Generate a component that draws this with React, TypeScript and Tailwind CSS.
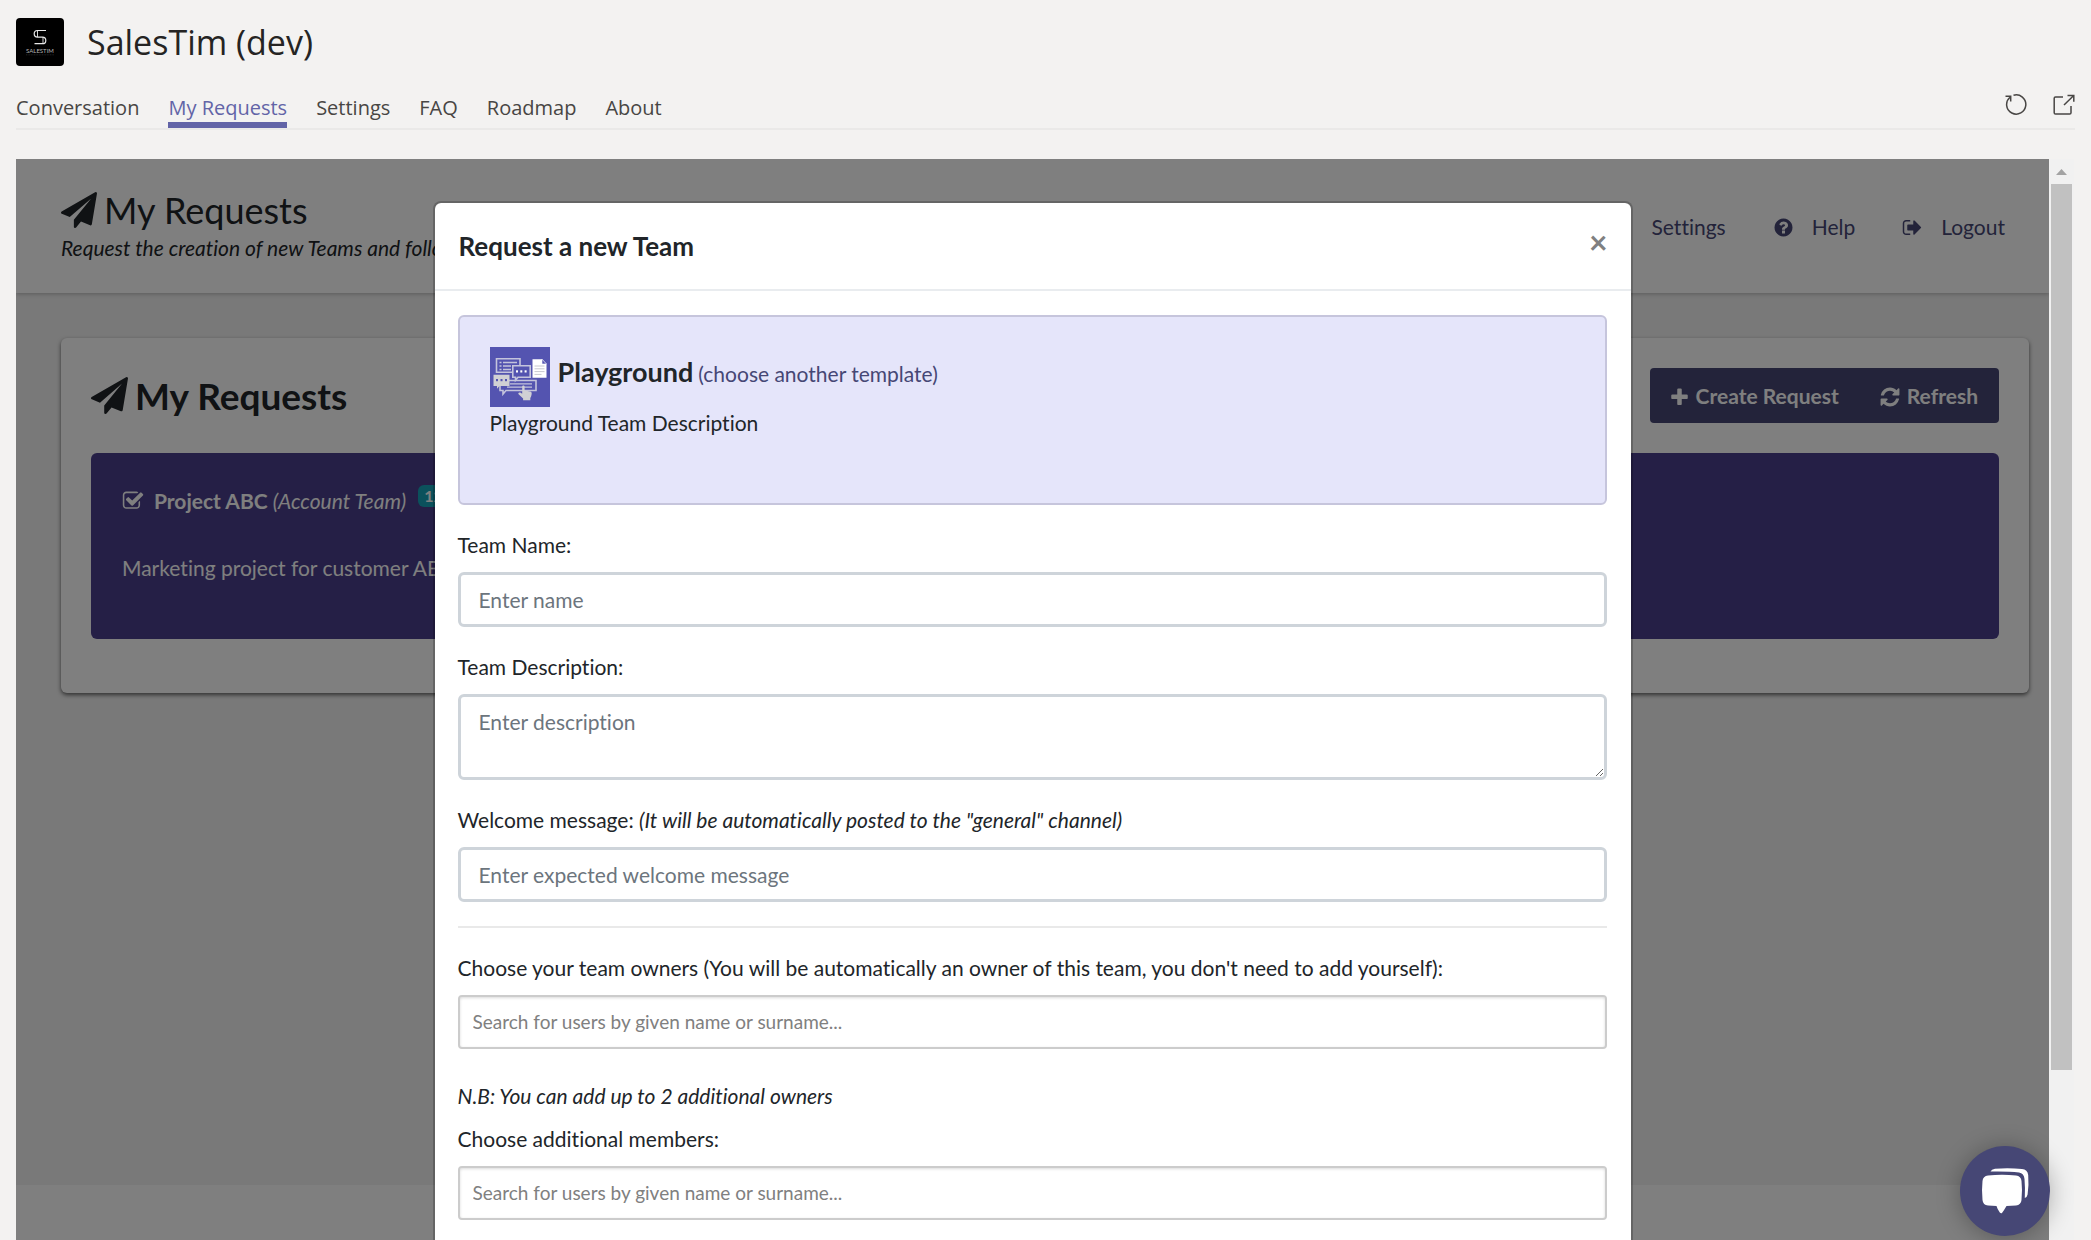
import React from "react";

const PLANE =
  "M1764 11q33 24 27 64l-256 1536q-5 29-32 45-14 8-31 8-11 0-24-5l-453-185-242 295q-18 23-49 23-13 0-22-4-19-7-30.5-23.5t-11.5-36.5v-349l864-1059-1069 925-395-162q-37-14-40-55-2-40 32-59l1664-960q15-9 32-9 20 0 36 11z";
const SIGN_OUT =
  "M704 1440q0 4 1 20t.5 26.5-3 23.5-10 19.5-20.5 6.5h-320q-119 0-203.5-84.5t-84.5-203.5v-704q0-119 84.5-203.5t203.5-84.5h320q13 0 22.5 9.5t9.5 22.5q0 4 1 20t.5 26.5-3 23.5-10 19.5-20.5 6.5h-320q-66 0-113 47t-47 113v704q0 66 47 113t113 47h312l11.5 1 11.5 3 8 5.5 7 9 2 13.5zm928-544q0 26-19 45l-544 544q-19 19-45 19t-45-19-19-45v-288h-448q-26 0-45-19t-19-45v-384q0-26 19-45t45-19h448v-288q0-26 19-45t45-19 45 19l544 544q19 19 19 45z";
const PLUS =
  "M1600 736v192q0 40-28 68t-68 28h-416v416q0 40-28 68t-68 28h-192q-40 0-68-28t-28-68v-416h-416q-40 0-68-28t-28-68v-192q0-40 28-68t68-28h416v-416q0-40 28-68t68-28h192q40 0 68 28t28 68v416h416q40 0 68 28t28 68z";
const REFRESH =
  "M1639 1056q0 5-1 7-64 268-268 434.5t-478 166.5q-146 0-282.5-55t-243.5-157l-129 129q-19 19-45 19t-45-19-19-45v-448q0-26 19-45t45-19h448q26 0 45 19t19 45-19 45l-137 137q71 66 161 102t187 36q134 0 250-65t186-179q11-17 53-117 8-23 30-23h192q13 0 22.5 9.5t9.5 22.5zm25-800v448q0 26-19 45t-45 19h-448q-26 0-45-19t-19-45 19-45l138-138q-148-137-349-137-134 0-250 65t-186 179q-11 17-53 117-8 23-30 23h-199q-13 0-22.5-9.5t-9.5-22.5v-7q65-268 270-434.5t480-166.5q146 0 284 55.5t245 156.5l130-129q19-19 45-19t45 19 19 45z";
const CHECK_SQUARE =
  "M1472 930v318q0 119-84.5 203.5t-203.5 84.5h-832q-119 0-203.5-84.5t-84.5-203.5v-832q0-119 84.5-203.5t203.5-84.5h832q63 0 117 25 15 7 18 23 3 17-9 29l-49 49q-10 10-23 10-3 0-9-2-23-6-45-6h-832q-66 0-113 47t-47 113v832q0 66 47 113t113 47h832q66 0 113-47t47-113v-254q0-13 9-22l64-64q10-10 23-10 6 0 12 3 20 8 20 29zm231-489l-814 814q-24 24-57 24t-57-24l-430-430q-24-24-24-57t24-57l110-110q24-24 57-24t57 24l263 263 647-647q24-24 57-24t57 24l110 110q24 24 24 57t-24 57z";
const QUESTION =
  "M1024 1376v-192q0-14-9-23t-23-9h-192q-14 0-23 9t-9 23v192q0 14 9 23t23 9h192q14 0 23-9t9-23zm256-672q0-88-55.5-163t-138.5-116-170-41q-243 0-371 213-15 24 8 42l132 100q7 6 19 6 16 0 25-12 53-68 86-92 34-24 86-24 48 0 85.5 26t37.5 59q0 38-20 61t-68 45q-63 28-115.5 86.5t-52.5 125.5v36q0 14 9 23t23 9h192q14 0 23-9t9-23q0-19 21.5-49.5t54.5-49.5q32-18 49-28.5t46-35 44.5-48 28-60.5 12.5-81zm384 192q0 209-103 385.5t-279.5 279.5-385.5 103-385.5-103-279.5-279.5-103-385.5 103-385.5 279.5-279.5 385.5-103 385.5 103 279.5 279.5 103 385.5z";

function Icon({ d, className }: { d: string; className: string }) {
  return (
    <svg viewBox="0 0 1792 1792" fill="currentColor" className={className} aria-hidden="true">
      <path d={d} />
    </svg>
  );
}

function AppLogo() {
  return (
    <svg viewBox="0 0 48 48" className="size-12 shrink-0" role="img" aria-label="SalesTim">
      <rect width="48" height="48" rx="4" fill="#000" />
      <g fill="none" stroke="#e8e8e8" strokeWidth="1.2">
        <path d="M30 12.5H21.500a3.300 3.300 0 0 0 0 6.600h5a3.300 3.300 0 0 1 0 6.600H18.500" />
        <path d="M21.5 12.5v6.600M27 19v6.600" strokeWidth="0.9" />
      </g>
      <text x="24" y="35" textAnchor="middle" fill="#b5b5b5" fontSize="6" fontFamily="Lato, sans-serif">
        SALESTIM
      </text>
      <path d="M10 36.8h28" stroke="#444" strokeWidth="0.5" strokeDasharray="1 .6" />
    </svg>
  );
}

function TemplateIcon() {
  return (
    <svg viewBox="0 0 60 60" className="size-[60px] shrink-0" aria-hidden="true">
      <rect width="60" height="60" fill="#5454b0" />
      <g fill="#5454b0" stroke="#c4c4dc" strokeWidth="1.6">
        <path d="M6.5 11.8h23.5v13.5H6.5z" />
        <path d="M10 33.5h36v10H16l-3 3.5v-3.5h-3z" />
        <path d="M22.8 18.8h17.4v11.4H28l-2.5 3v-3h-2.7z" />
      </g>
      <path d="M13 15.5h14M13 19h8M13 22.5h8M20 36.8h22M17 40.2h25" stroke="#c4c4dc" strokeWidth="1.3" />
      <path d="M9.5 15.5h2M9.5 19h2M9.5 22.5h2" stroke="#c4c4dc" strokeWidth="1.6" />
      <path d="M3.5 27.8h16v11.2H9.5L7 41.8V39H3.5z" fill="#d0d0d4" />
      <g fill="#fff">
        <rect x="26" y="23.3" width="2" height="2.2" />
        <rect x="30.3" y="23.3" width="2" height="2.2" />
        <rect x="34.6" y="23.3" width="2" height="2.2" />
      </g>
      <g fill="#5454b0">
        <rect x="6" y="32" width="2" height="2.2" />
        <rect x="10.5" y="32" width="2" height="2.2" />
        <rect x="15" y="32" width="2" height="2.2" />
      </g>
      <path d="M42.5 12.2h9.5l4.5 4.8v13.7h-14z" fill="#fff" />
      <path d="M52 12.2v4.8h4.5z" fill="#5454b0" stroke="#fff" strokeWidth=".6" />
      <path d="M44.5 19h10M44.5 21.8h10M44.5 24.6h10M44.5 27.4h7" stroke="#c8c8d0" strokeWidth="1" />
      <path
        d="M32.2 39.5c0-1.2 2.4-1.2 2.4 0v4l5.6 1c1.2.3 1.6 1 1.5 2.2-.2 2-.8 3.2-1.4 4.2v2.3h-7.2v-1.8l-4.5-4.2c-.9-1.2.5-2.3 1.7-1.6l1.9 1.2z"
        fill="#d0d0d4"
      />
    </svg>
  );
}

function ReloadIcon() {
  return (
    <svg viewBox="0 0 22 22" className="size-[22px]" fill="none" stroke="#484644" strokeWidth="1.5" aria-hidden="true">
      <path d="M8.5 1.300A9.600 9.600 0 1 1 5 3.200" />
      <path d="M0.500 2.300H5.700V7.500" />
    </svg>
  );
}

function PopOutIcon() {
  return (
    <svg viewBox="0 0 22 22" className="size-[22px]" fill="none" stroke="#484644" strokeWidth="1.5" aria-hidden="true">
      <path d="M10 3H2.5Q1.2 3 1.2 4.3V18.7Q1.2 20 2.5 20H16.7Q18 20 18 18.700V12" />
      <path d="M11 11 20.500 1.700M14.5 1.4H20.800V7.700" />
    </svg>
  );
}

function ChatIcon() {
  return (
    <svg viewBox="0 0 90 90" className="size-[90px]" fill="#fff" aria-hidden="true">
      <path d="M28 29.5Q42 27.8 56 29.5Q61 30.2 61.5 35Q62.5 44 61.5 54Q61 59 56 59.4L46.5 60Q44.5 63.5 42 67Q40.8 67.6 39.8 66.5Q37.5 63.5 36.5 60L28 59.5Q23 59 22.5 54Q21.5 44 22.5 35Q23 30.2 28 29.5Z" />
      <path d="M30.5 25.6Q31.5 23 35 22.7Q49 21.5 62 23Q67.5 23.6 68.2 29Q69 39 67.6 48.5Q67 51.5 64.8 52Q65.3 42 64.5 33Q64 27.5 59 26.6Q48 25.2 30.5 25.6Z" />
    </svg>
  );
}

const tabs = ["Conversation", "My Requests", "Settings", "FAQ", "Roadmap", "About"];

function AppHeader() {
  return (
    <header className="px-4 pt-[18px] font-['Open_Sans',sans-serif]">
      <div className="flex items-center gap-[23px]">
        <AppLogo />
        <span className="text-[34px] leading-[46px] text-[#252423]">SalesTim (dev)</span>
      </div>
      <div className="mt-7 flex items-start justify-between border-b-2 border-[#eae9e8]">
        <nav className="flex gap-[29px] text-[20px] leading-7 text-[#484644]">
          {tabs.map((tab) => (
            <a
              key={tab}
              href="#"
              aria-current={tab === "My Requests" ? "page" : undefined}
              className={
                tab === "My Requests"
                  ? "border-b-[6px] border-[#6264a7] text-[#6264a7]"
                  : "border-b-[6px] border-transparent"
              }
            >
              {tab}
            </a>
          ))}
        </nav>
        <div className="flex gap-[26px]">
          <button type="button" aria-label="Reload tab">
            <ReloadIcon />
          </button>
          <button type="button" aria-label="Open in new window">
            <PopOutIcon />
          </button>
        </div>
      </div>
    </header>
  );
}

function RequestsPage() {
  return (
    <div className="flex min-h-full flex-col bg-[#f2f2f2]">
      <header className="flex items-center justify-between bg-white py-[29px] pr-11 pl-[45px] shadow-[0_1px_4px_rgba(0,0,0,0.25)]">
        <div>
          <h1 className="flex items-center gap-[7px] text-[36px] leading-11">
            <Icon d={PLANE} className="size-9" />
            My Requests
          </h1>
          <p className="leading-8 italic">Request the creation of new Teams and follow</p>
        </div>
        <nav className="flex gap-[47px] pt-[2px] leading-8 text-[#464775]">
          <a href="#">Settings</a>
          <a href="#" className="flex items-center gap-[18px]">
            <Icon d={QUESTION} className="size-[21px]" />
            Help
          </a>
          <a href="#" className="flex items-center gap-[18px]">
            <Icon d={SIGN_OUT} className="size-[21px]" />
            Logout
          </a>
        </nav>
      </header>
      <main className="flex-1 px-[45px] py-[45px] pr-5">
        <section className="rounded-md bg-white px-[30px] pt-[30px] pb-[54px] shadow-[0_2px_4px_rgba(0,0,0,0.6)]">
          <div className="flex items-center justify-between">
            <h2 className="flex items-center gap-[7px] text-[37px] leading-11 font-bold">
              <Icon d={PLANE} className="size-[37px]" />
              My Requests
            </h2>
            <div className="flex rounded bg-[#464775] font-bold text-white">
              <button type="button" className="flex h-[55px] items-center gap-[6px] px-[19px]">
                <Icon d={PLUS} className="mt-[3px] size-[21px]" />
                Create Request
              </button>
              <button type="button" className="flex h-[55px] items-center gap-[6px] px-[21px]">
                <Icon d={REFRESH} className="mt-[3px] size-[22px]" />
                Refresh
              </button>
            </div>
          </div>
          <article className="mt-[30px] rounded-md bg-[#4a3e8c] px-[31px] pt-8 pb-[55px] text-white">
            <div className="flex items-center leading-8">
              <Icon d={CHECK_SQUARE} className="mr-[10px] size-[22px]" />
              <b>Project ABC</b>
              <i className="ml-[5px]">(Account Team)</i>
              <span className="mb-[10px] ml-3 rounded-md bg-[#17a2b8] px-[6px] text-[16px] leading-[22px] font-bold">12</span>
            </div>
            <p className="mt-[35px] leading-8">Marketing project for customer ABC</p>
          </article>
        </section>
      </main>
      <footer className="h-[55px] bg-white" />
    </div>
  );
}

const fieldClass =
  "block w-full rounded-md border-[3px] border-[#ced4da] bg-white px-[18px] text-[21px] leading-8 placeholder:text-[#6c757d] outline-none";
const searchClass =
  "block h-[54px] w-full rounded border-2 border-[#cccccc] bg-white px-[13px] pb-[2px] text-[19px] placeholder:text-[#808080] shadow-[inset_0_1px_3px_rgba(0,0,0,0.15)] outline-none";
const labelClass = "mb-[11px] block leading-8";

function RequestDialog() {
  return (
    <div
      role="dialog"
      aria-modal="true"
      aria-labelledby="dialog-title"
      className="w-full max-w-[1200px] rounded-lg border-2 border-black/20 bg-white bg-clip-padding pb-40"
    >
      <div className="flex items-start justify-between border-b-2 border-[#e9ecef] py-6 pr-[23px] pl-6">
        <h2 id="dialog-title" className="text-[26px] leading-[38px] font-bold">
          Request a new Team
        </h2>
        <button type="button" aria-label="Close" className="text-[32px] leading-[30px] font-bold text-[#808080]">
          ×
        </button>
      </div>
      <form className="pt-6 pr-6 pl-[23px]">
        <div className="mb-6 rounded-md border-2 border-[#c6c5dc] bg-[#e5e5fa] px-[30px] pt-[30px] pb-16">
          <div className="flex h-[60px] items-start gap-2">
            <TemplateIcon />
            <div className="flex items-baseline gap-[5px] pt-[6px]">
              <h3 className="text-[27px] leading-[38px] font-bold">Playground</h3>
              <a href="#" className="text-[#464775]">
                (choose another template)
              </a>
            </div>
          </div>
          <p className="leading-8">Playground Team Description</p>
        </div>
        <div className="mb-6">
          <label htmlFor="team-name" className={labelClass}>
            Team Name:
          </label>
          <input id="team-name" type="text" placeholder="Enter name" className={`${fieldClass} h-[55px]`} />
        </div>
        <div className="mb-6">
          <label htmlFor="team-description" className={labelClass}>
            Team Description:
          </label>
          <textarea
            id="team-description"
            placeholder="Enter description"
            className={`${fieldClass} h-[86px] resize-y py-[9px]`}
          />
        </div>
        <div className="mb-6">
          <label htmlFor="welcome" className={labelClass}>
            Welcome message: <i>(It will be automatically posted to the "general" channel)</i>
          </label>
          <input id="welcome" type="text" placeholder="Enter expected welcome message" className={`${fieldClass} h-[55px]`} />
        </div>
        <hr className="mb-6 border-t-2 border-[#e9e9e9]" />
        <label htmlFor="owners" className={labelClass}>
          Choose your team owners (You will be automatically an owner of this team, you don't need to add yourself):
        </label>
        <input id="owners" type="text" placeholder="Search for users by given name or surname..." className={searchClass} />
        <p className="mt-[31px] mb-[11px] leading-8 italic">N.B: You can add up to 2 additional owners</p>
        <label htmlFor="members" className={labelClass}>
          Choose additional members:
        </label>
        <input id="members" type="text" placeholder="Search for users by given name or surname..." className={searchClass} />
      </form>
    </div>
  );
}

export default function App() {
  return (
    <div className="flex h-screen flex-col overflow-hidden bg-[#f3f2f1]">
      <AppHeader />
      <div className="mt-[29px] mr-[17px] ml-4 flex min-h-0 flex-1 font-['Lato',sans-serif] text-[21px] text-[#212529] [font-variant-ligatures:none]">
        <div className="relative min-w-0 flex-1">
          <div className="h-full overflow-hidden">
            <RequestsPage />
          </div>
          <div className="absolute inset-0 flex items-start justify-center overflow-hidden bg-black/50 pt-[42px]">
            <RequestDialog />
          </div>
          <button
            type="button"
            aria-label="Open chat"
            className="absolute -right-px bottom-1 z-10 rounded-full bg-[#464775] shadow-[0_2px_24px_rgba(0,0,0,0.3)]"
          >
            <ChatIcon />
          </button>
        </div>
        <div className="flex w-[25px] flex-col bg-[#f1f1f1] px-[2px]">
          <svg viewBox="0 0 21 25" className="h-[25px] w-[21px] shrink-0" fill="#a3a3a3" aria-hidden="true">
            <path d="M5 16l5.5-6 5.5 6z" />
          </svg>
          <div className="h-[82%] bg-[#c1c1c1]" />
        </div>
      </div>
    </div>
  );
}
